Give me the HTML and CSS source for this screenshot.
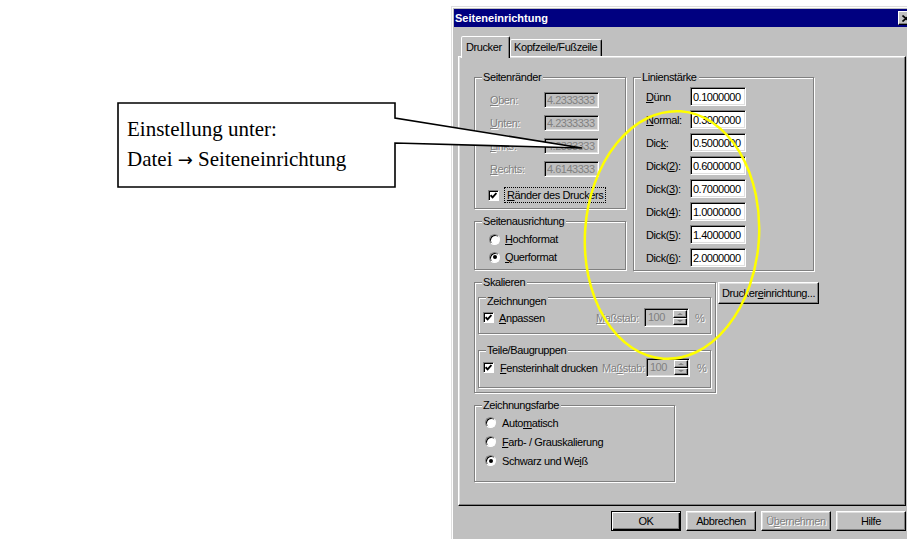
FILE: index.html
```html
<!DOCTYPE html>
<html lang="de">
<head>
<meta charset="utf-8">
<title>Seiteneinrichtung</title>
<link rel="stylesheet" href="styles.css">
</head>
<body>
<div class="desk">

  <div class="window">
    <div class="titlebar">
      <span class="title">Seiteneinrichtung</span>
      <span class="close-btn"><svg width="8" height="7" viewBox="0 0 8 7"><path d="M0.5 0.5 L7.5 6.5 M7.5 0.5 L0.5 6.5" stroke="#000" stroke-width="1.6"/></svg></span>
    </div>

    <div class="window-body">
      <div class="tabs">
        <div class="tab tab-active">Drucker</div>
        <div class="tab tab-other">Kopfzeile/Fußzeile</div>
      </div>

      <div class="panel">
        <div class="top-row">
          <div class="col">
            <div class="group g-margins">
              <div class="group-title">Seitenränder</div>
              <div class="fields fields-margins">
                <div class="field"><span class="lbl dis"><u>O</u>ben:</span><span class="edit dis">4.2333333</span></div>
                <div class="field"><span class="lbl dis"><u>U</u>nten:</span><span class="edit dis">4.2333333</span></div>
                <div class="field"><span class="lbl dis"><u>L</u>inks:</span><span class="edit dis">4.2333333</span></div>
                <div class="field"><span class="lbl dis"><u>R</u>echts:</span><span class="edit dis">4.6143333</span></div>
                <div class="check-row">
                  <span class="check"><svg width="7" height="7" viewBox="0 0 7 7"><path d="M0.6 3.2 L2.6 5.4 L6.4 1" fill="none" stroke="#000" stroke-width="1.8"/></svg></span>
                  <span class="focus"><u>R</u>änder des Druckers</span>
                </div>
              </div>
            </div>

            <div class="group g-orient">
              <div class="group-title">Seitenausrichtung</div>
              <div class="radios radios-orient">
                <div class="radio-row"><span class="radio"></span><span><u>H</u>ochformat</span></div>
                <div class="radio-row"><span class="radio on"></span><span><u>Q</u>uerformat</span></div>
              </div>
            </div>
          </div>

          <div class="group g-lines">
            <div class="group-title">Linienstärke</div>
            <div class="fields fields-lines">
              <div class="field"><span class="lbl"><u>D</u>ünn</span><span class="edit">0.1000000</span></div>
              <div class="field"><span class="lbl"><u>N</u>ormal:</span><span class="edit">0.3000000</span></div>
              <div class="field"><span class="lbl">Dic<u>k</u>:</span><span class="edit">0.5000000</span></div>
              <div class="field"><span class="lbl">Dick(<u>2</u>):</span><span class="edit">0.6000000</span></div>
              <div class="field"><span class="lbl">Dick(<u>3</u>):</span><span class="edit">0.7000000</span></div>
              <div class="field"><span class="lbl">Dick(<u>4</u>):</span><span class="edit">1.0000000</span></div>
              <div class="field"><span class="lbl">Dick(<u>5</u>):</span><span class="edit">1.4000000</span></div>
              <div class="field"><span class="lbl">Dick(<u>6</u>):</span><span class="edit">2.0000000</span></div>
            </div>
          </div>
        </div>

        <div class="scale-row">
          <div class="group g-scale">
            <div class="group-title">Skalieren</div>

            <div class="group g-sub g-draw">
              <div class="group-title">Zeichnungen</div>
              <div class="scale-line">
                <span class="chk-wrap w-draw">
                  <span class="check"><svg width="7" height="7" viewBox="0 0 7 7"><path d="M0.6 3.2 L2.6 5.4 L6.4 1" fill="none" stroke="#000" stroke-width="1.8"/></svg></span>
                  <span><u>A</u>npassen</span>
                </span>
                <span class="lbl dis l-draw"><u>M</u>aßstab:</span>
                <span class="spin s-draw"><span class="spin-val">100</span><span class="spin-btns"><span class="spin-up"></span><span class="spin-dn"></span></span></span>
                <span class="pct dis p-draw">%</span>
              </div>
            </div>

            <div class="group g-sub g-parts">
              <div class="group-title">Teile/Baugruppen</div>
              <div class="scale-line">
                <span class="chk-wrap w-parts">
                  <span class="check"><svg width="7" height="7" viewBox="0 0 7 7"><path d="M0.6 3.2 L2.6 5.4 L6.4 1" fill="none" stroke="#000" stroke-width="1.8"/></svg></span>
                  <span><u>F</u>ensterinhalt drucken</span>
                </span>
                <span class="lbl dis l-parts">Ma<u>ß</u>stab:</span>
                <span class="spin s-parts"><span class="spin-val">100</span><span class="spin-btns"><span class="spin-up"></span><span class="spin-dn"></span></span></span>
                <span class="pct dis p-parts">%</span>
              </div>
            </div>
          </div>

          <button class="btn btn-setup" type="button">Drucker<u>e</u>inrichtung...</button>
        </div>

        <div class="group g-color">
          <div class="group-title">Zeichnungsfarbe</div>
          <div class="radios radios-color">
            <div class="radio-row"><span class="radio"></span><span>Auto<u>m</u>atisch</span></div>
            <div class="radio-row"><span class="radio"></span><span><u>F</u>arb- / Grauskalierung</span></div>
            <div class="radio-row"><span class="radio on"></span><span>Schwarz und We<u>i</u>ß</span></div>
          </div>
        </div>
      </div>

      <div class="actions">
        <button class="btn btn-default" type="button">OK</button>
        <button class="btn" type="button">Abbrechen</button>
        <button class="btn btn-dis" type="button">Ü<u>b</u>ernehmen</button>
        <button class="btn" type="button">Hilfe</button>
      </div>
    </div>
  </div>

  <svg class="overlay" width="907" height="539" viewBox="0 0 907 539">
    <path class="callout-shape" d="M395 143 L395 187 L118 187 L118 103 L395 103 L395 118 L582 148 Z"/>
    <ellipse class="highlight" cx="672" cy="235" rx="87" ry="124" transform="rotate(4 672 235)"/>
  </svg>
  <div class="callout-text">Einstellung unter:<br>Datei <span class="arrow">→</span> Seiteneinrichtung</div>

</div>
</body>
</html>
```
FILE: styles.css
```css
* { box-sizing: border-box; }

html, body {
  margin: 0;
  padding: 0;
  background: #fff;
}

.desk {
  position: relative;
  width: 907px;
  height: 539px;
  overflow: hidden;
  background: #fff;
}

/* ---------- dialog window ---------- */
.window {
  position: absolute;
  left: 451px;
  top: 6px;
  width: 468px;
  height: 545px;
  display: flex;
  flex-direction: column;
  background: #c0c0c0;
  border: 1px solid;
  border-color: #dfdfdf #000 #000 #dfdfdf;
  box-shadow: inset 1px 1px #fff, inset -1px -1px #808080;
  padding: 2px;
  font: 11px "Liberation Sans", Arial, sans-serif;
  letter-spacing: -0.4px;
  color: #000;
}

.titlebar {
  height: 18px;
  flex: none;
  display: flex;
  align-items: center;
  justify-content: space-between;
  padding: 0 2px 0 1px;
  background: #000080;
}

.title {
  color: #fff;
  font-weight: bold;
  letter-spacing: 0;
}

.close-btn {
  width: 16px;
  height: 14px;
  display: flex;
  align-items: center;
  justify-content: center;
  background: #c0c0c0;
  border: 1px solid;
  border-color: #fff #000 #000 #fff;
  box-shadow: inset -1px -1px #808080;
}

.window-body {
  flex: 1;
  display: flex;
  flex-direction: column;
  padding: 9px 10px 0 4px;
}

/* ---------- tabs ---------- */
.tabs {
  height: 20px;
  flex: none;
  display: flex;
  align-items: flex-end;
  padding-left: 3px;
}

.tab {
  background: #c0c0c0;
  border: 1px solid;
  border-bottom: none;
  border-color: #fff #000 transparent #fff;
  border-radius: 2px 2px 0 0;
  box-shadow: inset -1px 0 #808080;
  white-space: nowrap;
}

.tab-active {
  position: relative;
  z-index: 1;
  width: 49px;
  height: 22px;
  margin-bottom: -2px;
  padding: 3px 0 0 4px;
  line-height: 14px;
}

.tab-other {
  width: 92px;
  height: 17px;
  padding: 0 0 0 3px;
  line-height: 15px;
}

.panel {
  flex: none;
  width: 448px;
  height: 450px;
  border: 1px solid;
  border-color: #fff #000 #000 #fff;
  box-shadow: inset -1px -1px #808080, inset 1px 1px #dfdfdf;
  padding: 20px 0 0 15px;
}

/* ---------- group boxes ---------- */
.group {
  border: 1px solid #808080;
  box-shadow: inset 1px 1px #fff, 1px 1px #fff;
}

.group-title {
  width: fit-content;
  margin: -7px 0 0 7px;
  padding: 0 2px 0 1px;
  line-height: 13px;
  background: #c0c0c0;
  white-space: nowrap;
}

.top-row {
  display: flex;
  gap: 7px;
}

.col {
  display: flex;
  flex-direction: column;
  gap: 12px;
}

.g-margins { width: 152px; height: 132px; }
.g-orient  { width: 152px; height: 49px; }
.g-lines   { width: 181px; height: 194px; }

.scale-row {
  display: flex;
  align-items: flex-start;
  gap: 2px;
  margin-top: 11px;
}

.g-scale { width: 242px; height: 111px; }
.g-draw  { width: 233px; height: 37px; margin: 8px 0 0 3px; padding-top: 4px; }
.g-parts { width: 233px; height: 38px; margin: 16px 0 0 3px; padding-top: 0; }
.g-parts .scale-line { margin-top: 1px; }
.g-color { width: 201px; height: 77px; margin-top: 12px; }

/* ---------- labelled edit fields ---------- */
.fields {
  display: flex;
  flex-direction: column;
}

.fields-margins {
  padding: 8px 0 0 15px;
  gap: 7px;
}

.fields-lines {
  padding: 3px 0 0 12px;
  gap: 4px;
}

.field {
  display: flex;
  align-items: center;
}

.fields-margins .field { height: 16px; }
.fields-lines .field { height: 19px; }
.fields-margins .lbl { width: 54px; }
.fields-lines .lbl { width: 44px; }

.lbl { white-space: nowrap; }

.dis {
  color: #808080;
  text-shadow: 1px 1px #fff;
}

.edit {
  display: flex;
  align-items: center;
  padding-left: 2px;
  background: #fff;
  border: 1px solid;
  border-color: #808080 #fff #fff #808080;
  box-shadow: inset 1px 1px #000, inset -1px -1px #dfdfdf;
  letter-spacing: -0.5px;
  white-space: nowrap;
  overflow: hidden;
}

.fields-margins .edit { width: 55px; height: 16px; }
.fields-lines .edit { width: 56px; height: 19px; }

.edit.dis {
  background: #c0c0c0;
  text-shadow: none;
}

/* ---------- check boxes ---------- */
.check-row {
  display: flex;
  align-items: center;
  gap: 5px;
  height: 18px;
  margin: 2px 0 0 -2px;
}

.check {
  flex: none;
  width: 11px;
  height: 11px;
  display: flex;
  align-items: center;
  justify-content: center;
  background: #fff;
  border: 1px solid;
  border-color: #808080 #fff #fff #808080;
  box-shadow: inset 1px 1px #000;
}

.focus {
  padding: 1px 2px;
  border: 1px dotted #000;
  white-space: nowrap;
}

/* ---------- radio buttons ---------- */
.radios {
  display: flex;
  flex-direction: column;
}

.radios-orient { padding: 2px 0 0 14px; }
.radios-color  { padding: 1px 0 0 10px; }

.radio-row {
  display: flex;
  align-items: center;
  white-space: nowrap;
}

.radios-orient .radio-row { height: 18px; gap: 5px; }
.radios-color .radio-row { height: 19px; gap: 6px; }

.radio {
  flex: none;
  width: 11px;
  height: 11px;
  display: flex;
  align-items: center;
  justify-content: center;
  border-radius: 50%;
  background: #fff;
  border: 1px solid;
  border-color: #808080 #fff #fff #808080;
  box-shadow: inset 1px 1px #000;
}

.radio.on::after {
  content: "";
  width: 4px;
  height: 4px;
  border-radius: 50%;
  background: #000;
}

/* ---------- scaling rows with spinners ---------- */
.scale-line {
  display: flex;
  align-items: center;
  height: 19px;
  padding-left: 4px;
  white-space: nowrap;
}

.chk-wrap {
  display: flex;
  align-items: center;
  flex: none;
}

.w-draw  { width: 113px; gap: 5px; }
.w-parts { width: 119px; gap: 6px; }

.l-draw  { width: 48px; }
.l-parts { width: 44px; }

.spin {
  display: flex;
  height: 19px;
  background: #c0c0c0;
  border: 1px solid;
  border-color: #808080 #fff #fff #808080;
  box-shadow: inset 1px 1px #000, inset -1px -1px #dfdfdf;
  padding: 1px;
}

.s-draw  { width: 45px; }
.s-parts { width: 44px; }

.spin-val {
  flex: 1;
  padding-left: 2px;
  line-height: 15px;
  color: #808080;
  letter-spacing: -0.5px;
}

.spin-btns {
  width: 14px;
  display: flex;
  flex-direction: column;
}

.spin-btns span {
  flex: 1;
  display: flex;
  align-items: center;
  justify-content: center;
  background: #c0c0c0;
  border: 1px solid;
  border-color: #fff #000 #000 #fff;
  box-shadow: inset -1px -1px #808080;
}

.spin-up::after {
  content: "";
  border-left: 3px solid transparent;
  border-right: 3px solid transparent;
  border-bottom: 2px solid #808080;
}

.spin-dn::after {
  content: "";
  border-left: 3px solid transparent;
  border-right: 3px solid transparent;
  border-top: 2px solid #808080;
}

.p-draw  { margin-left: 6px; }
.p-parts { margin-left: 7px; }

/* ---------- push buttons ---------- */
.btn {
  height: 20px;
  width: 70px;
  padding: 0;
  font: inherit;
  letter-spacing: inherit;
  color: #000;
  background: #c0c0c0;
  border: 1px solid;
  border-color: #fff #000 #000 #fff;
  box-shadow: inset -1px -1px #808080, inset 1px 1px #dfdfdf;
  white-space: nowrap;
}

.btn-setup {
  width: 101px;
  height: 22px;
}

.btn-default {
  border-color: #000;
  box-shadow: inset 1px 1px #fff, inset -1px -1px #000, inset -2px -2px #808080;
}

.btn-dis {
  color: #808080;
  text-shadow: 1px 1px #fff;
}

.actions {
  display: flex;
  justify-content: flex-end;
  gap: 5px;
  margin-top: 5px;
}

/* ---------- annotation layer ---------- */
.overlay {
  position: absolute;
  left: 0;
  top: 0;
  pointer-events: none;
}

.callout-shape {
  fill: #fff;
  stroke: #000;
  stroke-width: 1.6;
  stroke-linejoin: miter;
}

.highlight {
  fill: none;
  stroke: #ffff00;
  stroke-width: 2.5;
}

.callout-text {
  position: absolute;
  left: 127px;
  top: 114px;
  font: 21px/30px "Liberation Serif", "Times New Roman", serif;
  color: #000;
  white-space: nowrap;
}

.arrow {
  font-family: "DejaVu Sans", sans-serif;
  font-size: 18px;
}
```
